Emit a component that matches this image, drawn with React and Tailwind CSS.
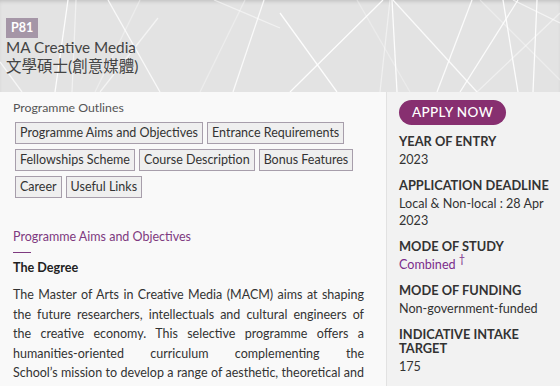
const LINES = [
  [68, 0, 55, 92, 0.9],
  [76, 0, 72, 92, 0.5],
  [108, 0, 160, 92, 0.8],
  [100, 92, 158, 18, 0.6],
  [0, 62, 22, 92, 0.7],
  [140, 0, 95, 92, 0.35],
  [233, 92, 264, 0, 0.8],
  [214, 0, 280, 28, 0.5],
  [200, 92, 245, 0, 0.35],
  [280, 13, 337, 92, 0.9],
  [290, 92, 383, 0, 0.9],
  [392, 0, 397, 92, 0.9],
  [380, 92, 390, 0, 0.45],
  [357, 0, 410, 92, 0.3],
  [393, 0, 477, 92, 0.85],
  [437, 92, 472, 0, 0.85],
  [460, 92, 518, 0, 0.85],
  [503, 0, 518, 92, 0.9],
  [537, 0, 533, 92, 0.9],
  [477, 92, 560, 13, 0.45],
  [513, 0, 560, 23, 0.6],
  [480, 0, 560, 80, 0.35],
]

function HeaderLines() {
  return (
    <svg className="absolute inset-0 h-full w-full" viewBox="0 0 560 92" preserveAspectRatio="none">
      {LINES.map(([x1, y1, x2, y2, o], i) => (
        <line key={i} x1={x1} y1={y1} x2={x2} y2={y2} stroke="#fff" strokeWidth="1.3" strokeOpacity={o} />
      ))}
    </svg>
  )
}

const TABS = [
  'Programme Aims and Objectives',
  'Entrance Requirements',
  'Fellowships Scheme',
  'Course Description',
  'Bonus Features',
  'Career',
  'Useful Links',
]

function Info({ label, children }) {
  return (
    <div className="mb-[10px]">
      <div className="text-[12.8px] font-bold uppercase leading-[14px] text-[#333]">{label}</div>
      <div className="mt-[3px] text-[12.6px] leading-[17px] text-[#333]">{children}</div>
    </div>
  )
}

export default function App() {
  return (
    <div className="h-[386px] w-[560px] overflow-hidden bg-[#f9f9f9] font-['Lato','Noto_Sans_CJK_TC',sans-serif]">
      <header className="relative h-[92px] bg-[#e3e3e3] shadow-[inset_0_3px_4px_-2px_rgba(0,0,0,0.18)]">
        <HeaderLines />
        <div className="relative px-[6px] pt-[14px]">
          <span className="inline-block h-[20px] bg-[#a596a7] px-[5px] text-[12.5px] font-bold leading-[20px] text-white">
            P81
          </span>
          <div className="-mt-[1px] text-[15.3px] leading-[20px] text-[#444]">MA Creative Media</div>
          <div className="-mt-[1px] text-[15.5px] leading-[21px] text-[#444]">文學碩士(創意媒體)</div>
        </div>
      </header>

      <div className="flex h-[294px]">
        <main className="w-[386px] shrink-0 pl-[13px] pr-[22px] pt-[8px]">
          <div className="text-[12.3px] leading-[16px] text-[#555]">Programme Outlines</div>
          <div className="ml-[2px] mt-[6px] flex flex-wrap gap-x-[4px] gap-y-[5px]">
            {TABS.map((t) => (
              <button
                key={t}
                type="button"
                className="h-[22px] border border-[#a79eab] bg-[#efefef] px-[4px] text-[12.5px] leading-[20px] text-[#333]"
              >
                {t}
              </button>
            ))}
          </div>

          <h2 className="mt-[31px] text-[12.5px] leading-[16px] text-[#7e3a80]">Programme Aims and Objectives</h2>
          <div className="mt-[7px] h-px w-[18px] bg-[#7e3a80]" />
          <h3 className="mt-[7px] text-[12.6px] font-bold leading-[16px] text-[#222]">The Degree</h3>
          <p className="mt-[9px] text-justify text-[12.5px] leading-[19.5px] text-[#333]">
            The Master of Arts in Creative Media (MACM) aims at shaping the future researchers, intellectuals and
            cultural engineers of the creative economy. This selective programme offers a{' '}
            <span className="whitespace-nowrap">humanities-oriented</span> curriculum complementing the{' '}
            {'School’s\u00a0mission'} to develop a range of aesthetic, theoretical and practical skills among
            students.
          </p>
        </main>

        <aside className="flex-1 border-l border-[#e2e2e2] bg-[#f2f2f2] pl-[12px] pr-[8px] pt-[7px]">
          <button
            type="button"
            className="h-[25px] w-[107px] rounded-full bg-[#872f70] text-[13.5px] font-medium tracking-[0.4px] text-white"
          >
            APPLY NOW
          </button>
          <div className="mt-[9px]">
            <Info label="Year of Entry">2023</Info>
            <Info label="Application Deadline">Local &amp; Non-local : 28 Apr 2023</Info>
            <Info label="Mode of Study">
              <span className="text-[#7b2d8b]">
                Combined <sup className="text-[11px]">†</sup>
              </span>
            </Info>
            <Info label="Mode of Funding">Non-government-funded</Info>
            <Info label="Indicative Intake Target">175</Info>
          </div>
        </aside>
      </div>
    </div>
  )
}
